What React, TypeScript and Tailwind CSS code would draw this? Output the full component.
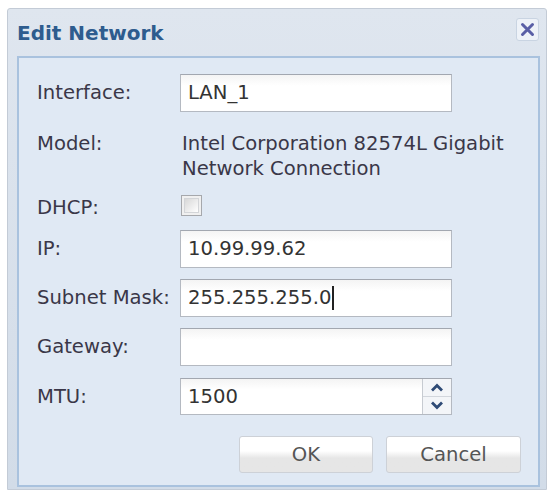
import React from "react";

const font = { fontFamily: '"DejaVu Sans", Verdana, sans-serif' };

function TextInput({ value, caret }: { value: string; caret?: boolean }) {
  return (
    <div className="flex h-[38px] w-[272px] items-center border border-[#b4b9c1] border-t-[#a2a7b0] bg-gradient-to-b from-[#f4f4f4] to-white to-30% pl-[7px] text-[19.6px] text-[#333]">
      <span>{value}</span>
      {caret && <span className="ml-[1px] inline-block h-[24px] w-[2px] bg-[#222]" />}
    </div>
  );
}

function Label({ children }: { children: React.ReactNode }) {
  return <div className="w-[143px] shrink-0 text-[19.6px] text-[#3a3748]">{children}</div>;
}

export default function App() {
  return (
    <div className="h-[493px] w-[554px] bg-white pl-[7px] pt-[8px]" style={font}>
      <div className="flex h-[482px] w-[540px] flex-col rounded-t-[3px] border border-[#c3cbd6] bg-gradient-to-b from-[#dfe6ef] to-[#d2dce8]">
        {/* Title bar */}
        <div className="flex h-[47px] shrink-0 items-center justify-between pl-[9px] pr-[7px]">
          <span className="text-[20px] font-bold text-[#2e5c8e]">Edit Network</span>
          <button className="mt-[-6px] flex h-[23px] w-[23px] items-center justify-center rounded-[3px] border border-[#c9d4e2] bg-[#eef2f8]">
            <svg width="15" height="15" viewBox="0 0 15 15">
              <path d="M2.5 2.5 L12.5 12.5 M12.5 2.5 L2.5 12.5" stroke="#5a5fa6" strokeWidth="3" strokeLinecap="round" />
            </svg>
          </button>
        </div>

        {/* Body panel */}
        <div className="mb-[2px] ml-[9px] mr-[6px] flex-1 border-2 border-[#a9c2de] bg-[#e0e9f4] pl-[18px] pr-[17px]">
          <div className="mt-[16px] flex items-center">
            <Label>Interface:</Label>
            <TextInput value="LAN_1" />
          </div>

          <div className="mt-[19px] flex leading-[25px]">
            <Label>Model:</Label>
            <div className="pl-[2px] text-[19.6px] text-[#3a3748]">
              Intel Corporation 82574L Gigabit
              <br />
              Network Connection
            </div>
          </div>

          <div className="mt-[15px] flex h-[24px] items-center">
            <Label>DHCP:</Label>
            <div className="ml-[1px] mt-[-6px] flex h-[21px] w-[21px] items-center justify-center border border-[#a6a8ac] bg-[#f0f0f0]">
              <div className="h-[15px] w-[15px] border border-[#d3d5d8] bg-gradient-to-br from-[#d8d8d8] to-white" />
            </div>
          </div>

          <div className="mt-[10px] flex items-center">
            <Label>IP:</Label>
            <TextInput value="10.99.99.62" />
          </div>

          <div className="mt-[11px] flex items-center">
            <Label>Subnet Mask:</Label>
            <TextInput value="255.255.255.0" caret />
          </div>

          <div className="mt-[11px] flex items-center">
            <Label>Gateway:</Label>
            <TextInput value="" />
          </div>

          <div className="mt-[12px] flex items-center">
            <Label>MTU:</Label>
            <div className="flex h-[37px] w-[272px] border border-[#b4b9c1] border-t-[#a2a7b0] bg-white">
              <div className="flex flex-1 items-center bg-gradient-to-b from-[#f4f4f4] to-white to-30% pl-[7px] text-[19.6px] text-[#333]">
                1500
              </div>
              <div className="flex w-[29px] flex-col border-l border-[#c7cbd1] bg-[#f3f5f8]">
                <div className="flex flex-1 items-center justify-center border-b border-[#d2d6dc]">
                  <svg width="14" height="9" viewBox="0 0 14 9">
                    <path d="M2 7.5 L7 2.5 L12 7.5" fill="none" stroke="#2f4b76" strokeWidth="2.8" />
                  </svg>
                </div>
                <div className="flex flex-1 items-center justify-center">
                  <svg width="14" height="9" viewBox="0 0 14 9">
                    <path d="M2 1.5 L7 6.5 L12 1.5" fill="none" stroke="#2f4b76" strokeWidth="2.8" />
                  </svg>
                </div>
              </div>
            </div>
          </div>

          <div className="mt-[21px] flex justify-end gap-[13px]">
            <button className="h-[37px] w-[134px] rounded-[3px] border border-[#cdd1d7] bg-gradient-to-b from-white from-40% to-[#e6e6e6] to-60% text-[19.6px] text-[#555]">
              OK
            </button>
            <button className="h-[37px] w-[135px] rounded-[3px] border border-[#cdd1d7] bg-gradient-to-b from-white from-40% to-[#e6e6e6] to-60% text-[19.6px] text-[#555]">
              Cancel
            </button>
          </div>
        </div>
      </div>
    </div>
  );
}
